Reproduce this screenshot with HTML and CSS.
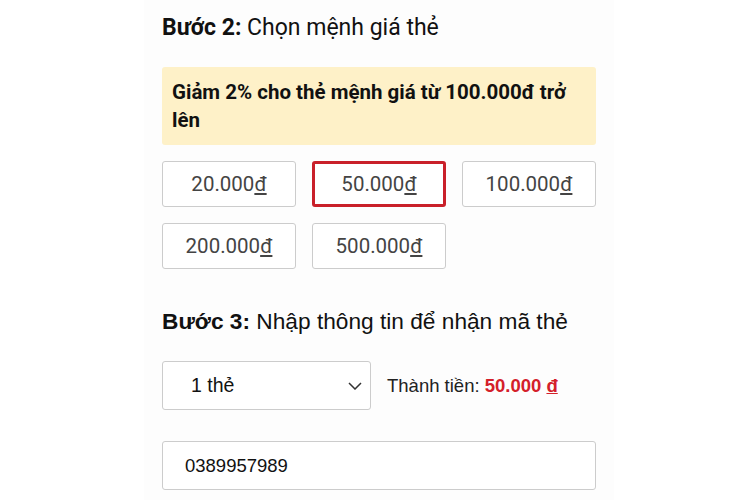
FILE: index.html
```html
<!DOCTYPE html>
<html lang="vi">
<head>
    <meta charset="UTF-8">
    <meta name="viewport" content="width=device-width, initial-scale=1.0">
    <title>Mua thẻ</title>
    <link rel="stylesheet" href="styles.css">
</head>
<body>
    <div class="page">
        <h2 class="step-title"><b>Bước 2:</b> Chọn mệnh giá thẻ</h2>

        <div class="promo">Giảm 2% cho thẻ mệnh giá từ 100.000đ trở lên</div>

        <div class="price-grid">
            <button class="price-btn">20.000<u>đ</u></button>
            <button class="price-btn active">50.000<u>đ</u></button>
            <button class="price-btn">100.000<u>đ</u></button>
            <button class="price-btn">200.000<u>đ</u></button>
            <button class="price-btn">500.000<u>đ</u></button>
        </div>

        <h2 class="step-title step-3"><b>Bước 3:</b> Nhập thông tin để nhận mã thẻ</h2>

        <div class="qty-row">
            <div class="qty-select">
                <span>1 thẻ</span>
                <svg width="14" height="8" viewBox="0 0 14 8"><path d="M1 1l6 6 6-6" fill="none" stroke="#333" stroke-width="1.5"/></svg>
            </div>
            <div class="total">Thành tiền: <strong>50.000 <u>đ</u></strong></div>
        </div>

        <input type="text" class="phone-input" value="0389957989">
    </div>
</body>
</html>
```

FILE: styles.css
```css
* {
    margin: 0;
    padding: 0;
    box-sizing: border-box;
}
body {
    background: #fff;
    font-family: Roboto, sans-serif;
    color: #111;
}
.page {
    width: 470px;
    margin-left: 144px;
    padding: 14px 18px 0;
    background: #fdfdfd;
    min-height: 500px;
}
.step-title {
    font-size: 23px;
    font-weight: normal;
    line-height: 28px;
    color: #111;
}
.step-title b {
    font-weight: bold;
}
.promo {
    margin-top: 25px;
    background: #fef1c8;
    border-radius: 3px;
    padding: 11px 10px 11px;
    font-size: 20.5px;
    font-weight: bold;
    line-height: 28px;
    color: #111;
}
.price-grid {
    margin-top: 16px;
    display: grid;
    grid-template-columns: repeat(3, 1fr);
    gap: 16px 16px;
}
.price-btn {
    height: 46px;
    background: #fff;
    border: 1px solid #ccc;
    border-radius: 3px;
    font-family: Roboto, sans-serif;
    font-size: 20.5px;
    color: #444;
}
.price-btn.active {
    border: 3px solid #c9202a;
}
.step-title.step-3 {
    margin-top: 38px;
    font-family: "Liberation Sans", Arial, sans-serif;
    font-size: 22.7px;
}
.qty-row {
    margin-top: 26px;
    display: flex;
    align-items: center;
    gap: 16px;
    font-family: "Liberation Sans", Arial, sans-serif;
}
.qty-select {
    width: 209px;
    height: 49px;
    background: #fff;
    border: 1px solid #ccc;
    border-radius: 3px;
    display: flex;
    align-items: center;
    justify-content: space-between;
    padding: 0 8px 0 28px;
    font-size: 19.5px;
    color: #111;
}
.total {
    font-size: 18.5px;
    color: #222;
}
.total strong {
    color: #d4202a;
}
.phone-input {
    display: block;
    margin-top: 31px;
    width: 434px;
    height: 49px;
    background: #fff;
    border: 1px solid #ccc;
    border-radius: 3px;
    padding: 0 22px;
    font-family: "Liberation Sans", Arial, sans-serif;
    font-size: 18.5px;
    color: #111;
}
```
